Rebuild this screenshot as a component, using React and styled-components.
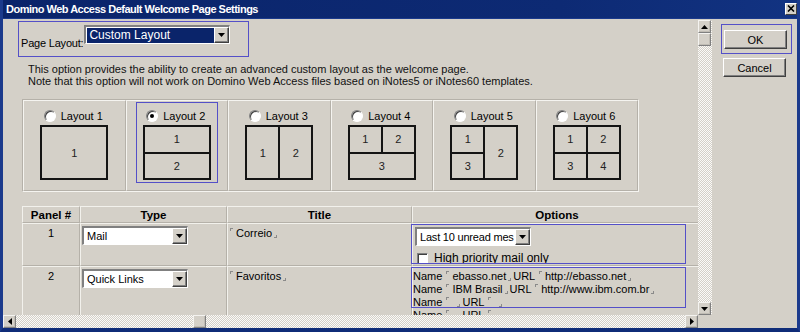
import React from "react";
import styled, { createGlobalStyle } from "styled-components";

const Global = createGlobalStyle`
  html, body { margin: 0; padding: 0; background: #d4d0c8; }
  body { font-family: "Liberation Sans", Arial, sans-serif; font-size: 11px; color: #000; }
  * { box-sizing: border-box; }
`;

const FOCUS = "#5450c8";

const Window = styled.div`
  width: 800px;
  height: 332px;
  display: flex;
  flex-direction: column;
  background: #d4d0c8;
  border-left: 3px solid #1b3a8c;
  border-right: 3px solid #1b3a8c;
  border-bottom: 4px solid #0f2c78;
  overflow: hidden;
`;

const TitleBar = styled.div`
  height: 19px;
  flex: none;
  margin-left: -3px;
  margin-right: -3px;
  padding: 0 3px 1px 6px;
  display: flex;
  align-items: center;
  justify-content: space-between;
  background: linear-gradient(90deg, #0a246a 0%, #0d2a74 70%, #123382 100%);
  border-bottom: 1px solid #1b3a8c;
`;

const TitleText = styled.span`
  color: #fff;
  font-weight: bold;
  font-size: 11px;
  letter-spacing: -0.5px;
`;

const CloseBtn = styled.div`
  width: 12px;
  height: 12px;
  background: #d4d0c8;
  border-top: 1px solid #fff;
  border-left: 1px solid #fff;
  border-right: 1px solid #404040;
  border-bottom: 1px solid #404040;
  display: flex;
  align-items: center;
  justify-content: center;
`;

const Body = styled.div`
  flex: 1;
  display: flex;
  padding-top: 1px;
`;

const Pane = styled.div`
  width: 709px;
  display: grid;
  grid-template-columns: 695px 14px;
  grid-template-rows: 295px 13px;
`;

const Content = styled.div`
  overflow: hidden;
  padding-top: 1px;
  display: flex;
  flex-direction: column;
  align-items: flex-start;
  & > * { flex-shrink: 0; }
`;

const Track = styled.div`
  display: flex;
  flex-direction: ${(p) => (p.$horizontal ? "row" : "column")};
  align-items: flex-start;
  background: repeating-conic-gradient(#d4d0c8 0 25%, #fbfaf8 0 50%) 0 0 / 2px 2px;
`;

const TrackFill = styled.div`
  flex: ${(p) => (p.$grow ? 1 : "none")};
  width: ${(p) => (p.$size ? `${p.$size}px` : "auto")};
  align-self: stretch;
`;

const ScrollBtn = styled.div`
  width: 13px;
  height: 13px;
  flex: none;
  background: #d4d0c8;
  border-top: 1px solid #f4f3f0;
  border-left: 1px solid #f4f3f0;
  border-right: 1px solid #808080;
  border-bottom: 1px solid #808080;
  box-shadow: inset -1px -1px 0 #c0bcb4;
  display: flex;
  align-items: center;
  justify-content: center;
`;

const Corner = styled.div`
  background: #d4d0c8;
`;

const PageLayoutBox = styled.div`
  margin-left: 15px;
  width: 231px;
  height: 36px;
  border: 1px solid ${FOCUS};
  display: flex;
  align-items: flex-start;
  padding: 3px 0 0 2px;
  gap: 1px;
`;

const Label = styled.span`
  margin-top: 12px;
  font-size: 11px;
  letter-spacing: -0.2px;
`;

const Select = styled.div`
  width: ${(p) => p.$w}px;
  height: 19px;
  display: flex;
  align-items: center;
  background: ${(p) => (p.$active ? "#0a246a" : "#fff")};
  color: ${(p) => (p.$active ? "#fff" : "#000")};
  border-top: 2px solid #808080;
  border-left: 2px solid #808080;
  border-right: 1px solid #fff;
  border-bottom: 1px solid #fff;
  box-shadow: ${(p) => (p.$active ? "inset 1px 1px 0 #fff" : "none")};
  font-size: ${(p) => (p.$big ? "12px" : "11px")};
  overflow: hidden;
`;

const SelectText = styled.span`
  flex: 1;
  padding-left: 3px;
  white-space: nowrap;
  overflow: hidden;
  letter-spacing: ${(p) => (p.$tight ? "-0.2px" : "0")};
`;

const DropBtn = styled.div`
  width: 15px;
  height: 16px;
  flex: none;
  background: #d4d0c8;
  border-top: 1px solid #fff;
  border-left: 1px solid #fff;
  border-right: 1px solid #404040;
  border-bottom: 1px solid #404040;
  box-shadow: inset -1px -1px 0 #808080;
  display: flex;
  align-items: center;
  justify-content: center;
`;

const Desc = styled.p`
  margin: 6px 0 0 25px;
  line-height: 12px;
  font-size: 11px;
  color: #111;
`;

const LayoutGroup = styled.div`
  margin: 12px 0 0 19px;
  display: grid;
  grid-template-columns: repeat(6, 102.5px);
  height: 93px;
  border-top: 1px solid #b5b1a9;
  border-left: 1px solid #b5b1a9;
  border-right: 1px solid #f5f4f0;
  border-bottom: 1px solid #f5f4f0;
`;

const LayoutCell = styled.div`
  border-top: 1px solid #f5f4f0;
  border-left: 1px solid #f5f4f0;
  border-right: 1px solid #b5b1a9;
  border-bottom: 1px solid #b5b1a9;
  display: flex;
  justify-content: center;
  padding-top: 1px;
`;

const LayoutInner = styled.div`
  width: 82px;
  height: 81px;
  border: 1px solid ${(p) => (p.$selected ? FOCUS : "transparent")};
  display: flex;
  flex-direction: column;
  align-items: center;
  padding-top: 6px;
`;

const RadioRow = styled.div`
  display: flex;
  align-items: center;
  gap: 5px;
  height: 14px;
  font-size: 11px;
  margin-left: -2px;
`;

const Radio = styled.span`
  width: 12px;
  height: 12px;
  border-radius: 50%;
  background: #fff;
  border: 1px solid;
  border-color: #808080 #fff #fff #808080;
  box-shadow: inset 1px 1px 0 #404040;
  display: flex;
  align-items: center;
  justify-content: center;
  &::after {
    content: "";
    width: 4px;
    height: 4px;
    border-radius: 50%;
    background: ${(p) => (p.$checked ? "#000" : "transparent")};
  }
`;

const Diagram = styled.div`
  margin-top: 2px;
  width: 68px;
  height: 55px;
  padding: 2px;
  background: #141414;
  display: grid;
  gap: 2px;
  grid-template-areas: ${(p) => p.$areas};
  grid-auto-columns: 1fr;
  grid-auto-rows: 1fr;
`;

const Pane1 = styled.div`
  grid-area: ${(p) => p.$area};
  background: #d4d0c8;
  display: flex;
  align-items: center;
  justify-content: center;
  font-size: 11px;
  color: #222;
`;

const Table = styled.table`
  margin: 14px 0 0 19px;
  border-collapse: separate;
  border-spacing: 0;
  table-layout: fixed;
  width: 680px;
  font-size: 11px;
`;

const Th = styled.th`
  height: 17px;
  font-weight: bold;
  font-size: 11.5px;
  text-align: center;
  padding: 0;
  border: 1px solid #f2f1ec;
  border-right-color: #b5b1a9;
  border-bottom-color: #b5b1a9;
`;

const Td = styled.td`
  height: ${(p) => p.$h}px;
  vertical-align: top;
  text-align: ${(p) => (p.$center ? "center" : "left")};
  padding: ${(p) => p.$pad || "2px 1px"};
  border: 1px solid #f2f1ec;
  border-right-color: #b5b1a9;
  border-bottom-color: #b5b1a9;
`;

const FieldMark = styled.span`
  display: inline-block;
  width: 3px;
  height: 3px;
  margin: ${(p) => (p.$end ? "0 2px 0 2px" : "0 3px 0 1px")};
  vertical-align: ${(p) => (p.$end ? "-1px" : "6px")};
  border-color: #8a8a8a;
  border-style: solid;
  border-width: ${(p) => (p.$end ? "0 1px 1px 0" : "1px 0 0 1px")};
`;

const OptionBox = styled.div`
  width: 275px;
  height: ${(p) => p.$h}px;
  margin-left: -2px;
  border: 1px solid ${FOCUS};
  padding: ${(p) => p.$pad};
  overflow: ${(p) => (p.$spill ? "visible" : "hidden")};
  line-height: 13px;
`;

const CheckRow = styled.div`
  margin-top: 6px;
  display: flex;
  align-items: center;
  gap: 6px;
  font-size: 12px;
`;

const Check = styled.span`
  width: 11px;
  height: 11px;
  background: #fff;
  border: 1px solid;
  border-color: #808080 #fff #fff #808080;
  box-shadow: inset 1px 1px 0 #404040;
  margin-left: 2px;
`;

const Side = styled.div`
  flex: 1;
  display: flex;
  flex-direction: column;
  align-items: flex-start;
  padding: 4px 0 0 9px;
`;

const FocusRing = styled.div`
  width: 71px;
  height: 30px;
  border: 1px solid ${FOCUS};
  padding: 5px 0 0 2px;
`;

const Button = styled.div`
  width: 63px;
  height: 19px;
  background: #d4d0c8;
  border-top: 1px solid #fff;
  border-left: 1px solid #fff;
  border-right: 1px solid #404040;
  border-bottom: 1px solid #404040;
  box-shadow: inset -1px -1px 0 #808080;
  display: flex;
  align-items: center;
  justify-content: center;
  font-size: 11px;
  margin-left: ${(p) => (p.$plain ? "2px" : "0")};
  margin-top: ${(p) => (p.$plain ? "4px" : "0")};
`;

const Arrow = ({ dir }) => {
  const pts = {
    up: "0,4 7,4 3.5,0",
    down: "0,0 7,0 3.5,4",
    left: "4,0 4,7 0,3.5",
    right: "0,0 0,7 4,3.5",
  }[dir];
  const vert = dir === "up" || dir === "down";
  return (
    <svg width={vert ? 7 : 4} height={vert ? 4 : 7} viewBox={vert ? "0 0 7 4" : "0 0 4 7"}>
      <polygon points={pts} fill="#000" />
    </svg>
  );
};

const Drop = ({ w, text, active, big, tight }) => (
  <Select $w={w} $active={active} $big={big}>
    <SelectText $tight={tight}>{text}</SelectText>
    <DropBtn>
      <Arrow dir="down" />
    </DropBtn>
  </Select>
);

const layouts = [
  { name: "Layout 1", areas: `"a"`, panes: ["a"] },
  { name: "Layout 2", areas: `"a" "b"`, panes: ["a", "b"], selected: true },
  { name: "Layout 3", areas: `"a b"`, panes: ["a", "b"] },
  { name: "Layout 4", areas: `"a b" "c c"`, panes: ["a", "b", "c"] },
  { name: "Layout 5", areas: `"a b" "c b"`, panes: ["a", "b", "c"] },
  { name: "Layout 6", areas: `"a b" "c d"`, panes: ["a", "b", "c", "d"] },
];

const Field = ({ children }) => (
  <>
    <FieldMark />
    {children}
    <FieldMark $end />
  </>
);

const links = [
  ["ebasso.net", "http://ebasso.net"],
  ["IBM Brasil", "http://www.ibm.com.br"],
  ["", ""],
  ["", ""],
];

export default function App() {
  return (
    <>
      <Global />
      <Window>
        <TitleBar>
          <TitleText>Domino Web Access Default Welcome Page Settings</TitleText>
          <CloseBtn>
            <svg width="8" height="7" viewBox="0 0 8 7">
              <path d="M1 0.5 L7 6.5 M7 0.5 L1 6.5" stroke="#000" strokeWidth="1.6" />
            </svg>
          </CloseBtn>
        </TitleBar>
        <Body>
          <Pane>
            <Content>
              <PageLayoutBox>
                <Label>Page Layout:</Label>
                <Drop w={146} text="Custom Layout" active big />
              </PageLayoutBox>
              <Desc>
                This option provides the ability to create an advanced custom layout as the welcome page.
                <br />
                Note that this option will not work on Domino Web Access files based on iNotes5 or iNotes60 templates.
              </Desc>
              <LayoutGroup>
                {layouts.map((l) => (
                  <LayoutCell key={l.name}>
                    <LayoutInner $selected={l.selected}>
                      <RadioRow>
                        <Radio $checked={l.selected} />
                        {l.name}
                      </RadioRow>
                      <Diagram $areas={l.areas}>
                        {l.panes.map((p, i) => (
                          <Pane1 key={p} $area={p}>
                            {i + 1}
                          </Pane1>
                        ))}
                      </Diagram>
                    </LayoutInner>
                  </LayoutCell>
                ))}
              </LayoutGroup>
              <Table>
                <colgroup>
                  <col style={{ width: 58 }} />
                  <col style={{ width: 147 }} />
                  <col style={{ width: 185 }} />
                  <col style={{ width: 290 }} />
                </colgroup>
                <thead>
                  <tr>
                    <Th>Panel #</Th>
                    <Th>Type</Th>
                    <Th>Title</Th>
                    <Th>Options</Th>
                  </tr>
                </thead>
                <tbody>
                  <tr>
                    <Td $h={43} $center $pad="3px 1px">1</Td>
                    <Td $h={43}>
                      <Drop w={106} text="Mail" />
                    </Td>
                    <Td $h={43} $pad="3px 1px">
                      <Field>Correio</Field>
                    </Td>
                    <Td $h={43} $pad="0 0 0 0">
                      <OptionBox $h={40} $pad="2px 0 0 3px">
                        <Drop w={116} text="Last 10 unread mes" tight />
                        <CheckRow>
                          <Check />
                          High priority mail only
                        </CheckRow>
                      </OptionBox>
                    </Td>
                  </tr>
                  <tr>
                    <Td $h={60} $center $pad="3px 1px">2</Td>
                    <Td $h={60}>
                      <Drop w={106} text="Quick Links" />
                    </Td>
                    <Td $h={60} $pad="3px 1px">
                      <Field>Favoritos</Field>
                    </Td>
                    <Td $h={60} $pad="0">
                      <OptionBox $h={41} $pad="2px 0 0 1px" $spill>
                        {links.map(([n, u], i) => (
                          <div key={i}>
                            Name <Field>{n || "\u00a0"}</Field>URL <Field>{u || "\u00a0"}</Field>
                          </div>
                        ))}
                      </OptionBox>
                    </Td>
                  </tr>
                </tbody>
              </Table>
            </Content>
            <Track>
              <ScrollBtn>
                <Arrow dir="up" />
              </ScrollBtn>
              <ScrollBtn />
              <TrackFill $grow />
              <ScrollBtn>
                <Arrow dir="down" />
              </ScrollBtn>
            </Track>
            <Track $horizontal>
              <ScrollBtn>
                <Arrow dir="left" />
              </ScrollBtn>
              <TrackFill $size={177} />
              <ScrollBtn />
              <TrackFill $grow />
              <ScrollBtn>
                <Arrow dir="right" />
              </ScrollBtn>
            </Track>
            <Corner />
          </Pane>
          <Side>
            <FocusRing>
              <Button>OK</Button>
            </FocusRing>
            <Button $plain>Cancel</Button>
          </Side>
        </Body>
      </Window>
    </>
  );
}
